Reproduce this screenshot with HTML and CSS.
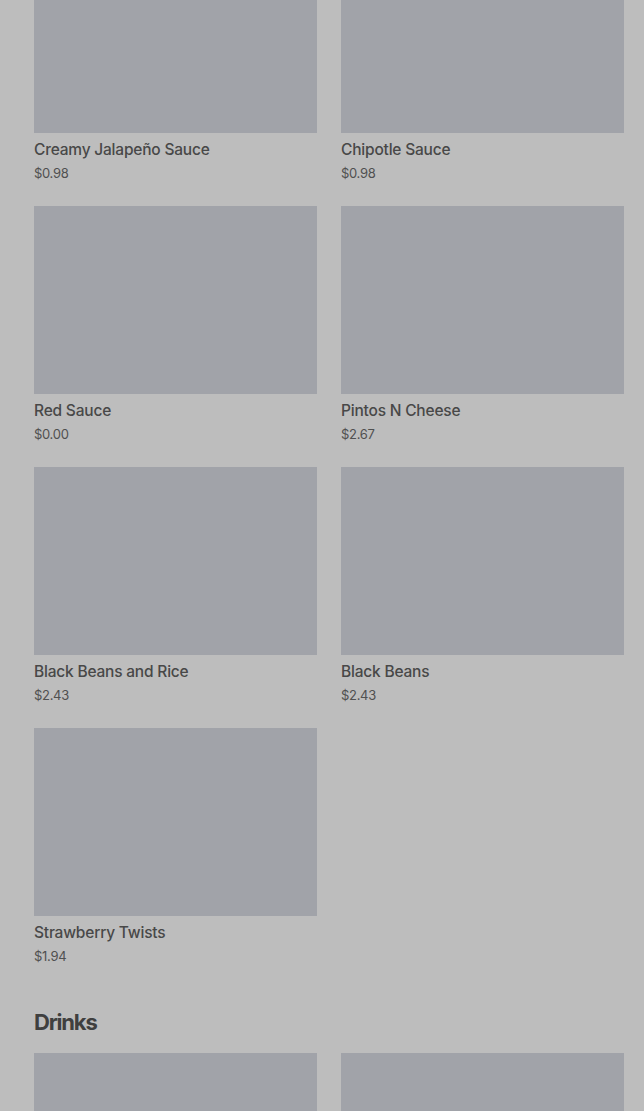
FILE: index.html
```
<!DOCTYPE html>
<html lang="en">
<head>
    <meta charset="UTF-8">
    <meta name="viewport" content="width=device-width, initial-scale=1.0">
    <title>Menu</title>
    <link rel="stylesheet" href="styles.css">
</head>
<body>
    <div class="menu">
        <!-- 酱料和配菜 -->
        <section class="category scrolled">
            <div class="item-grid">
                <div class="item">
                    <div class="item-image"></div>
                    <p class="item-name">Creamy Jalapeño Sauce</p>
                    <p class="item-price">$0.98</p>
                </div>
                <div class="item">
                    <div class="item-image"></div>
                    <p class="item-name">Chipotle Sauce</p>
                    <p class="item-price">$0.98</p>
                </div>
                <div class="item">
                    <div class="item-image"></div>
                    <p class="item-name">Red Sauce</p>
                    <p class="item-price">$0.00</p>
                </div>
                <div class="item">
                    <div class="item-image"></div>
                    <p class="item-name">Pintos N Cheese</p>
                    <p class="item-price">$2.67</p>
                </div>
                <div class="item">
                    <div class="item-image"></div>
                    <p class="item-name">Black Beans and Rice</p>
                    <p class="item-price">$2.43</p>
                </div>
                <div class="item">
                    <div class="item-image"></div>
                    <p class="item-name">Black Beans</p>
                    <p class="item-price">$2.43</p>
                </div>
                <div class="item">
                    <div class="item-image"></div>
                    <p class="item-name">Strawberry Twists</p>
                    <p class="item-price">$1.94</p>
                </div>
            </div>
        </section>

        <!-- 饮料（名称和价格在屏幕下方，未显示） -->
        <section class="category">
            <h2 class="category-title">Drinks</h2>
            <div class="item-grid">
                <div class="item">
                    <div class="item-image"></div>
                </div>
                <div class="item">
                    <div class="item-image"></div>
                </div>
            </div>
        </section>
    </div>
</body>
</html>
```

FILE: styles.css
```
/* 页面基本样式（整页被半透明遮罩覆盖，颜色已按遮罩后的效果取值） */
html, body {
    margin: 0;
    background-color: #bdbdbd;
    font-family: Inter, "Noto Sans", Arial, sans-serif;
    color: #454545;
}

.menu {
    padding: 0 20px 0 34px;
}

/* 页面已向下滚动 */
.scrolled {
    margin-top: -55px;
}

.category {
    margin-bottom: 44px;
}

.category-title {
    margin: 0 0 19px 0;
    font-size: 22px;
    font-weight: 700;
    letter-spacing: -1.2px;
    line-height: 24px;
    color: #3f3f3f;
}

/* 两列商品网格 */
.item-grid {
    display: grid;
    grid-template-columns: 1fr 1fr;
    column-gap: 24px;
    row-gap: 23px;
}

.item-image {
    height: 188px;
    background-color: #a1a3a9;
}

.item-name {
    margin: 7px 0 0 0;
    font-size: 15.5px;
    font-weight: 500;
    letter-spacing: -0.2px;
    line-height: 20px;
    color: #484848;
}

.item-price {
    margin: 3px 0 0 0;
    font-size: 13px;
    letter-spacing: -0.3px;
    line-height: 20px;
    color: #505050;
}
```
